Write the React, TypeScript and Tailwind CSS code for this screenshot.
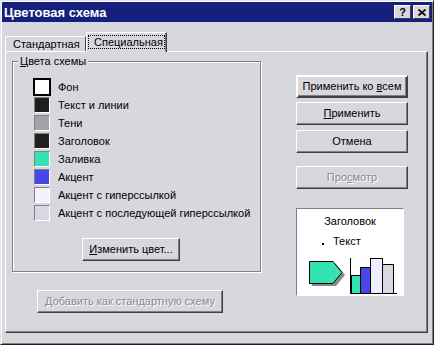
import React from 'react'

const btn =
  'flex items-center justify-center h-[23px] bg-[#d8d7de] border border-t-white border-l-white border-r-[#404040] border-b-[#404040] shadow-[inset_-1px_-1px_#808080] text-[11px] leading-none'
const disabledText = 'text-[#8a8a8a] [text-shadow:1px_1px_0_#ffffff]'

const swatches = [
  { label: 'Фон', color: '#ffffff', selected: true },
  { label: 'Текст и линии', color: '#1e1e1e' },
  { label: 'Тени', color: '#a3a2ab' },
  { label: 'Заголовок', color: '#202020' },
  { label: 'Заливка', color: '#33e3b2' },
  { label: 'Акцент', color: '#4747e6' },
  { label: 'Акцент с гиперссылкой', color: '#f3f3ff' },
  { label: 'Акцент с последующей гиперссылкой', color: '#d9d8e2' },
]

function Swatch({ color, selected }: { color: string; selected?: boolean }) {
  if (selected) {
    return (
      <div className="w-[18px] h-[18px] border-2 border-black" style={{ backgroundColor: color }} />
    )
  }
  return (
    <div
      className="w-[16px] h-[16px] border border-t-[#808080] border-l-[#808080] border-r-white border-b-white"
      style={{ backgroundColor: color }}
    />
  )
}

export default function App() {
  return (
    <div className="w-[434px] h-[345px] bg-[#d8d7de] font-['Liberation_Sans',Arial,sans-serif] text-black border border-t-[#e4e4e4] border-l-[#e4e4e4] border-r-[#202020] border-b-[#202020] shadow-[inset_1px_1px_#ffffff,inset_-1px_-1px_#808080] p-[1px] flex flex-col">
      {/* заголовок окна */}
      <div className="h-[20px] bg-[#151f7c] flex items-center justify-between pl-[2px] pr-[2px]">
        <span className="text-white font-bold text-[13px] leading-none">Цветовая схема</span>
        <div className="flex gap-[2px]">
          <div className="w-[17px] h-[14px] bg-[#d8d7de] border border-t-white border-l-white border-r-[#404040] border-b-[#404040] flex items-center justify-center text-[11px] font-bold leading-none">
            ?
          </div>
          <div className="w-[17px] h-[14px] bg-[#d8d7de] border border-t-white border-l-white border-r-[#404040] border-b-[#404040] flex items-center justify-center">
            <svg width="8" height="7" viewBox="0 0 8 7">
              <path d="M0.5 0.5 L7.5 6.5 M7.5 0.5 L0.5 6.5" stroke="#000" strokeWidth="1.6" />
            </svg>
          </div>
        </div>
      </div>

      <div className="flex-1 flex flex-col pl-[3px] pr-[3px] pt-[9px]">
        {/* вкладки */}
        <div className="flex items-end h-[20px]">
          <div className="h-[15px] w-[81px] pl-[7px] flex items-center border-t border-l border-t-white border-l-white border-r border-r-[#404040] rounded-tl-[2px] text-[11px] leading-none">
            Стандартная
          </div>
          <div className="relative z-10 -mb-px h-[20px] w-[81px] px-[1px] pt-[2px] bg-[#d8d7de] border-t border-l border-t-white border-l-white border-r border-r-[#404040] shadow-[inset_-1px_0_#808080] rounded-tl-[2px]">
            <div className="h-[14px] pl-[5px] flex items-center border border-dotted border-black text-[11px] leading-none">
              Специальная
            </div>
          </div>
        </div>

        {/* панель */}
        <div className="w-[423px] h-[282px] border border-t-white border-l-white border-r-[#404040] border-b-[#404040] shadow-[inset_-1px_-1px_#808080] flex pl-[6px] pt-[9px]">
          <div className="flex flex-col w-[249px]">
            <div className="relative h-[211px] border border-[#808080] shadow-[inset_1px_1px_#ffffff,1px_1px_#ffffff] pt-[16px] pl-[20px] flex flex-col">
              <span className="absolute -top-[7px] left-[5px] px-[2px] bg-[#d8d7de] text-[11px] leading-[13px]">
                <u>Ц</u>вета схемы
              </span>
              {swatches.map((s) => (
                <div key={s.label} className="h-[18px] flex items-center">
                  <div className="w-[18px] h-[18px] flex items-center justify-center">
                    <Swatch color={s.color} selected={s.selected} />
                  </div>
                  <span className="ml-[7px] text-[11px] leading-none whitespace-nowrap">{s.label}</span>
                </div>
              ))}
              <div className={`${btn} text-black w-[98px] ml-[49px] mt-[16px]`}>
                <span>
                  <u>И</u>зменить цвет...
                </span>
              </div>
            </div>
            <div className={`${btn} w-[186px] ml-[25px] mt-[18px] ${disabledText}`}>
              <span>
                <u>Д</u>обавить как стандартную схему
              </span>
            </div>
          </div>

          <div className="ml-[35px] mt-[14px] flex flex-col w-[112px]">
            <div className={`${btn} text-black w-[112px] border-black shadow-[inset_1px_1px_#ffffff,inset_-1px_-1px_#404040,inset_-2px_-2px_#808080]`}>
              <span>
                Применить ко <u>в</u>сем
              </span>
            </div>
            <div className={`${btn} text-black w-[112px] mt-[4px]`}>
              <span>
                <u>П</u>рименить
              </span>
            </div>
            <div className={`${btn} text-black w-[112px] mt-[5px]`}>Отмена</div>
            <div className={`${btn} w-[112px] mt-[13px] ${disabledText}`}>
              <span>
                Про<u>с</u>мотр
              </span>
            </div>

            {/* образец */}
            <div className="mt-[19px] w-[108px] h-[88px] bg-white border border-t-[#808080] border-l-[#808080] border-r-white border-b-white flex flex-col">
              <div className="mt-[6px] h-[13px] leading-[13px] text-center text-[11px]">Заголовок</div>
              <div className="mt-[7px] h-[13px] flex items-center pl-[25px]">
                <div className="w-[2px] h-[2px] bg-black mt-[5px]" />
                <span className="ml-[9px] text-[11px] leading-none">Текст</span>
              </div>
              <svg className="mt-[6px]" width="106" height="41" viewBox="0 0 106 41">
                <polygon points="15,10 39,10 48,21 39,32 15,32" fill="#8a8a8a" />
                <polygon points="12.5,7.5 36,7.5 45,18.5 36,29.5 12.5,29.5" fill="#33e3b2" stroke="#000" />
                <rect x="54.5" y="21.5" width="9" height="18" fill="#33e3b2" stroke="#000" />
                <rect x="63.5" y="13.5" width="10" height="26" fill="#4747e6" stroke="#000" />
                <rect x="73.5" y="4.5" width="12" height="35" fill="#eeeeff" stroke="#000" />
                <rect x="85.5" y="10.5" width="11" height="29" fill="#d9d8e2" stroke="#000" />
                <path d="M53.5 4 V39.5 H100" fill="none" stroke="#000" />
              </svg>
            </div>
          </div>
        </div>
      </div>
    </div>
  )
}
